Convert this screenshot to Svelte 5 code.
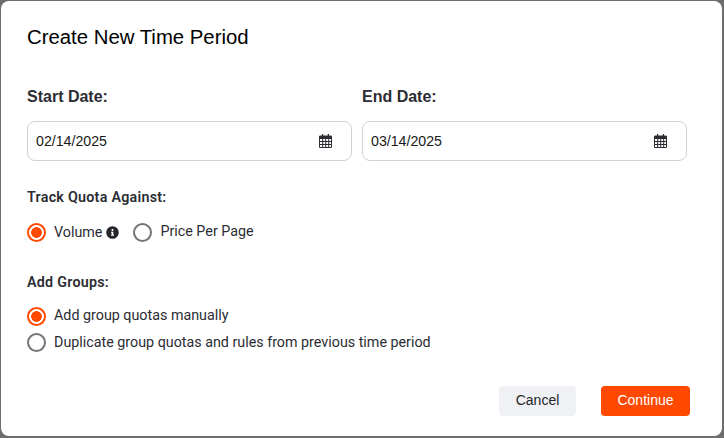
<script>
  let start = $state('02/14/2025');
  let end = $state('03/14/2025');
  let track = $state('volume');
  let groups = $state('manual');
</script>

<div class="backdrop">
  <div class="modal">
    <h2 class="title">Create New Time Period</h2>
    <div class="dates">
      <label class="date">
        <span class="date-label">Start Date:</span>
        <span class="field">
          <input bind:value={start} />
          <svg class="cal" viewBox="0 0 13 14" aria-hidden="true"><path fill="#2b2d33" fill-rule="evenodd" d="M3 0h1.200v1.400H8.800V0H10v1.400h1.600c.8 0 1.400.6 1.400 1.300v10c0 .7-.6 1.300-1.400 1.300H1.400C.6 14 0 13.400 0 12.700v-10c0-.7.6-1.300 1.400-1.300H3zM1 5v2h2.200V5zm3.200 0v2h2V5zm3 0v2h2V5zm3 0v2H12V5zM1 8v2h2.200V8zm3.200 0v2h2V8zm3 0v2h2V8zm3 0v2H12V8zM1 11v2h2.200v-2zm3.200 0v2h2v-2zm3 0v2h2v-2zm3 0v2H12v-2z"/></svg>
        </span>
      </label>
      <label class="date">
        <span class="date-label">End Date:</span>
        <span class="field">
          <input bind:value={end} />
          <svg class="cal" viewBox="0 0 13 14" aria-hidden="true"><path fill="#2b2d33" fill-rule="evenodd" d="M3 0h1.200v1.400H8.800V0H10v1.400h1.600c.8 0 1.400.6 1.400 1.300v10c0 .7-.6 1.300-1.400 1.300H1.400C.6 14 0 13.400 0 12.700v-10c0-.7.6-1.300 1.400-1.300H3zM1 5v2h2.200V5zm3.200 0v2h2V5zm3 0v2h2V5zm3 0v2H12V5zM1 8v2h2.200V8zm3.200 0v2h2V8zm3 0v2h2V8zm3 0v2H12V8zM1 11v2h2.200v-2zm3.200 0v2h2v-2zm3 0v2h2v-2zm3 0v2H12v-2z"/></svg>
        </span>
      </label>
    </div>

    <div class="group track">
      <div class="group-label">Track Quota Against:</div>
      <div class="inline">
        <button class="radio" onclick={() => (track = 'volume')}>
          <span class="dot" class:on={track === 'volume'}></span>
          <span>Volume</span>
          <svg class="info" viewBox="0 0 512 512" aria-hidden="true"><path fill="#24262b" d="M256 8a248 248 0 1 0 0 496 248 248 0 0 0 0-496zm0 110a42 42 0 1 1 0 84 42 42 0 0 1 0-84zm56 254c0 7-5 12-12 12h-88c-7 0-12-5-12-12v-24c0-7 5-12 12-12h12v-64h-12c-7 0-12-5-12-12v-24c0-7 5-12 12-12h64c7 0 12 5 12 12v100h12c7 0 12 5 12 12z"/></svg>
        </button>
        <button class="radio" onclick={() => (track = 'price')}>
          <span class="dot" class:on={track === 'price'}></span>
          <span class="up">Price Per Page</span>
        </button>
      </div>
    </div>

    <div class="group add">
      <div class="group-label">Add Groups:</div>
      <div class="stack">
        <button class="radio" onclick={() => (groups = 'manual')}>
          <span class="dot" class:on={groups === 'manual'}></span>
          <span class="up">Add group quotas manually</span>
        </button>
        <button class="radio" onclick={() => (groups = 'dup')}>
          <span class="dot" class:on={groups === 'dup'}></span>
          <span>Duplicate group quotas and rules from previous time period</span>
        </button>
      </div>
    </div>

    <div class="actions">
      <button class="btn cancel">Cancel</button>
      <button class="btn continue">Continue</button>
    </div>
  </div>
</div>

<style>
  :global(body) {
    margin: 0;
    background: #6e6e6e;
  }
  .backdrop {
    width: 724px;
    height: 438px;
    box-sizing: border-box;
    padding: 1px 2px 2px 1px;
  }
  .modal {
    box-sizing: border-box;
    height: 100%;
    background: #fff;
    border-radius: 8px;
    padding: 25px 34px 0 26px;
    font-family: "Liberation Sans", Arial, sans-serif;
    color: #24262b;
  }
  .title {
    margin: 0;
    font-size: 20.35px;
    font-weight: 400;
    line-height: 23px;
    color: #000;
  }
  .dates {
    display: flex;
    gap: 10px;
    margin-top: 39px;
  }
  .date {
    display: flex;
    flex-direction: column;
    width: 325px;
  }
  .date-label {
    font-size: 16px;
    font-weight: 700;
    line-height: 18px;
    color: #2b2d33;
  }
  .field {
    display: flex;
    align-items: center;
    box-sizing: border-box;
    height: 40px;
    margin-top: 15px;
    padding: 0 19px 0 8px;
    border: 1px solid #d0d2d6;
    border-radius: 8px;
  }
  input {
    flex: 1;
    min-width: 0;
    border: 0;
    outline: 0;
    padding: 0;
    font: 400 14.2px "Liberation Sans", Arial, sans-serif;
    color: #1a1a1a;
    background: transparent;
  }
  .cal {
    width: 13px;
    height: 14px;
  }
  .group-label {
    font-family: Roboto, sans-serif;
    font-size: 14.3px;
    font-weight: 600;
    letter-spacing: 0.25px;
    line-height: 18px;
    color: #2b2d33;
  }
  .track { margin-top: 27px; }
  .add { margin-top: 31px; }
  .inline {
    display: flex;
    gap: 14px;
    margin-top: 16px;
  }
  .add .stack {
    display: flex;
    flex-direction: column;
    gap: 6px;
    margin-top: 15px;
  }
  .radio {
    display: flex;
    align-items: center;
    gap: 8px;
    padding: 0;
    border: 0;
    background: none;
    height: 20px;
    font-family: Roboto, sans-serif;
    font-size: 14.3px;
    color: #2b2d33;
    cursor: pointer;
  }
  .up {
    margin-top: -2px;
  }
  .dot {
    box-sizing: border-box;
    width: 19px;
    height: 19px;
    border-radius: 50%;
    border: 2px solid #757575;
    background: #fff;
  }
  .dot.on {
    border-color: #ff4800;
    background: radial-gradient(circle, #ff4800 0 5px, #fff 5.6px);
  }
  .info {
    width: 13px;
    height: 13px;
    margin-left: -4px;
  }
  .actions {
    display: flex;
    justify-content: flex-end;
    gap: 25px;
    margin-top: 34px;
    margin-right: -2px;
  }
  .btn {
    height: 30px;
    border: 0;
    border-radius: 4px;
    font-family: "Liberation Sans", Arial, sans-serif;
    font-size: 14px;
    padding: 0 0 2px;
    cursor: pointer;
  }
  .cancel {
    width: 77px;
    background: #f0f1f4;
    color: #24262b;
  }
  .continue {
    width: 89px;
    background: #ff4800;
    color: #fff;
  }
</style>
